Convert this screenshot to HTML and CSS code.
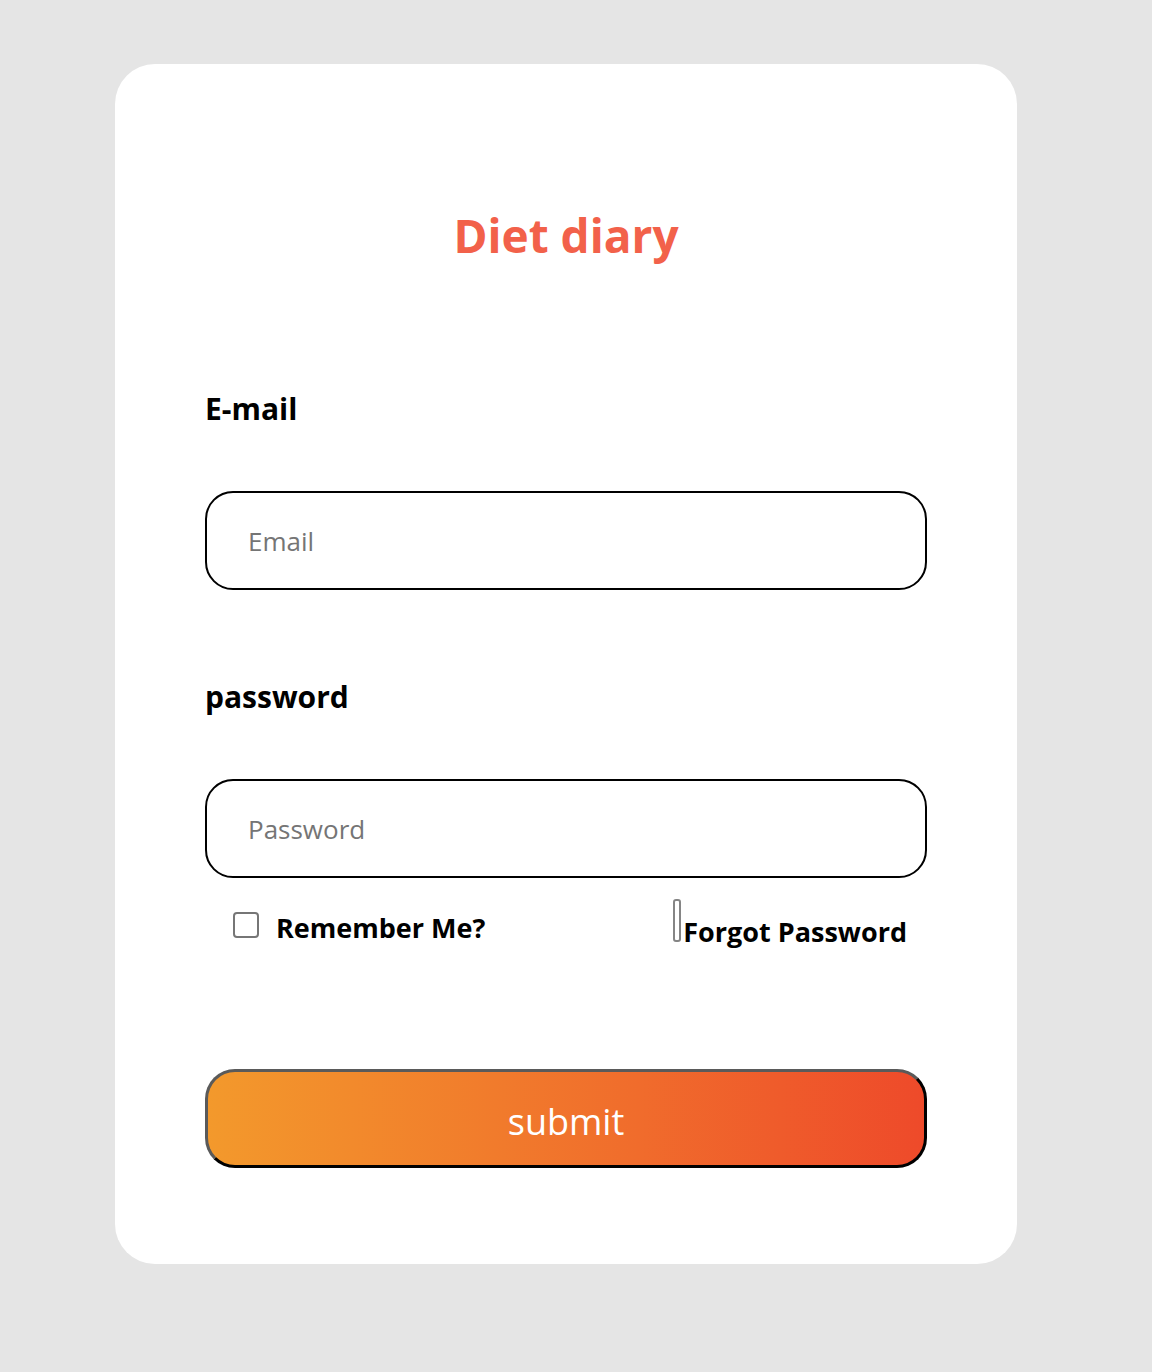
FILE: index.html
```html
<!DOCTYPE html>
<html>
<head>
<meta charset="utf-8">
<link rel="stylesheet" href="styles.css">
</head>
<body>
<div class="page">
  <form class="card">
    <h1 class="title">Diet diary</h1>
    <label class="label">E-mail</label>
    <div class="field"><span class="placeholder">Email</span></div>
    <label class="label label-pw">password</label>
    <div class="field"><span class="placeholder">Password</span></div>
    <div class="options">
      <div class="remember"><span class="checkbox"></span><span class="remember-text">Remember Me?</span></div>
      <div class="forgot"><span class="tiny-input"></span>Forgot Password</div>
    </div>
    <div class="submit">submit</div>
  </form>
</div>
</body>
</html>
```

FILE: styles.css
```css
html, body {
  margin: 0;
  padding: 0;
  background: #e5e5e5;
  font-family: "Open Sans", "Noto Sans CJK KR", sans-serif;
}
.page {
  padding: 64px 0 0 115px;
  height: 1308px;
}
.card {
  box-sizing: border-box;
  width: 902px;
  height: 1200px;
  background: #fff;
  border-radius: 40px;
  padding: 0 90px;
  display: flex;
  flex-direction: column;
}
.title {
  margin: 140px 0 0;
  text-align: center;
  color: #f2614a;
  font-size: 46px;
  font-weight: 700;
  line-height: 62px;
}
.label {
  display: block;
  font-size: 30px;
  font-weight: 700;
  color: #000;
  line-height: 40px;
  margin-top: 123px;
}
.label-pw {
  margin-top: 87px;
}
.field {
  box-sizing: border-box;
  margin-top: 62px;
  height: 99px;
  border: 2px solid #000;
  border-radius: 28px;
  display: flex;
  align-items: center;
  padding-left: 41px;
}
.placeholder {
  color: #757575;
  font-size: 26px;
}
.options {
  display: flex;
  justify-content: space-between;
  align-items: flex-start;
  padding: 20px 20px 0 28px;
  height: 191px;
  box-sizing: border-box;
}
.remember {
  display: flex;
  align-items: center;
  gap: 17px;
  font-size: 27px;
  font-weight: 700;
  margin-top: 6px;
}
.remember-text {
  padding-top: 5px;
}
.checkbox {
  width: 22px;
  height: 22px;
  border: 2px solid #767676;
  border-radius: 4px;
}
.forgot {
  font-size: 27px;
  font-weight: 700;
  line-height: 30px;
  padding-top: 1px;
}
.tiny-input {
  display: inline-block;
  width: 4px;
  height: 39px;
  border: 2px solid #858585;
  border-radius: 3px;
  margin-right: 2px;
}
.submit {
  box-sizing: border-box;
  height: 99px;
  border: 3px solid;
  border-color: #5a5a5a #000 #000 #5a5a5a;
  border-radius: 30px;
  background: linear-gradient(90deg, #f3992c 0%, #f06c2c 60%, #ee4a2a 100%);
  color: #fff;
  font-size: 36px;
  padding-top: 6px;
  display: flex;
  align-items: center;
  justify-content: center;
}
```
